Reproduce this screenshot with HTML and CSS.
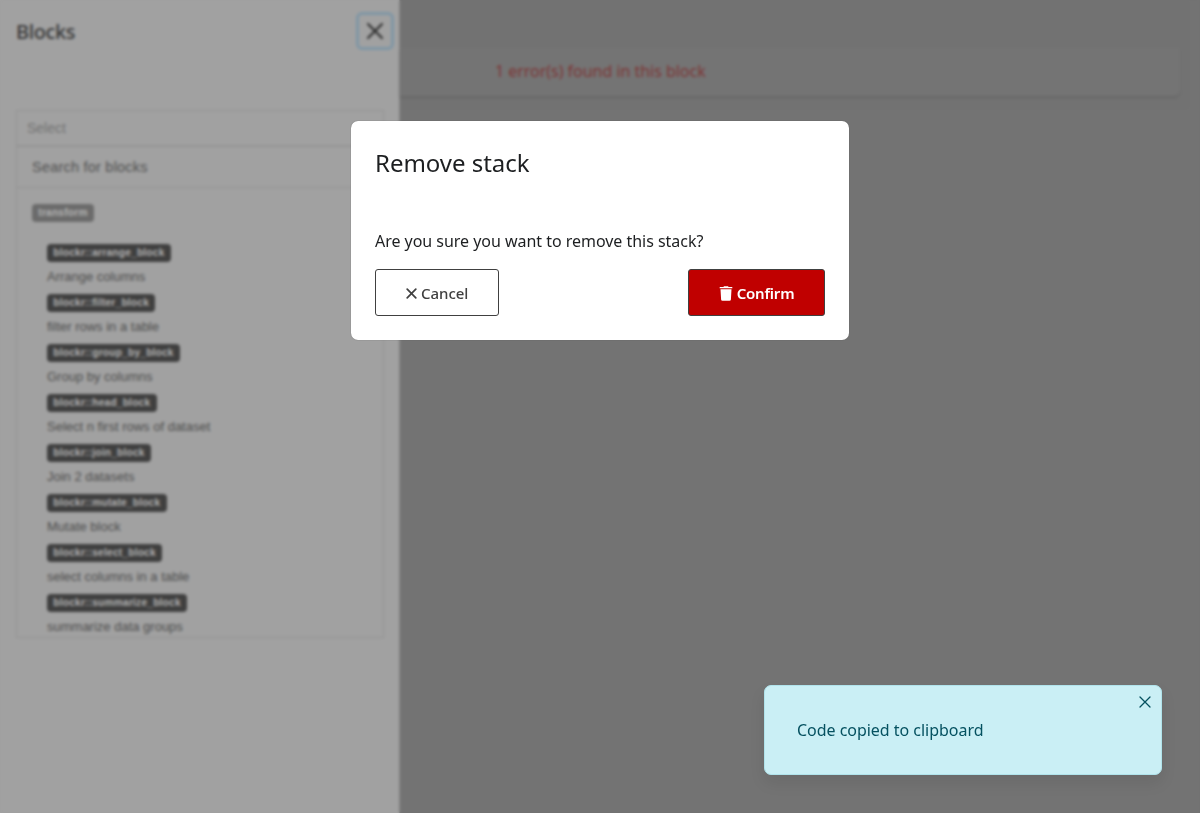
FILE: index.html
```html
<!DOCTYPE html>
<html lang="en">
<head>
<meta charset="utf-8">
<title>Remove stack</title>
<link rel="stylesheet" href="styles.css">
</head>
<body>
<div class="page">
  <aside class="panel">
    <header class="panel-header">
      <h5 class="panel-title">Blocks</h5>
      <button class="panel-close" aria-label="Close"><svg width="16" height="16" viewBox="0 0 16 16"><path d="M1 1l14 14M15 1L1 15" fill="none" stroke="#2a2a2a" stroke-width="2" stroke-linecap="round"/></svg></button>
    </header>
    <div class="picker">
      <div class="picker-value">Select</div>
      <div class="picker-search">Search for blocks</div>
      <div class="picker-list">
        <div class="group"><span class="badge badge-group">transform</span></div>
        <div class="option"><span class="badge">blockr::arrange_block</span><p>Arrange columns</p></div>
        <div class="option"><span class="badge">blockr::filter_block</span><p>filter rows in a table</p></div>
        <div class="option"><span class="badge">blockr::group_by_block</span><p>Group by columns</p></div>
        <div class="option"><span class="badge">blockr::head_block</span><p>Select n first rows of dataset</p></div>
        <div class="option"><span class="badge">blockr::join_block</span><p>Join 2 datasets</p></div>
        <div class="option"><span class="badge">blockr::mutate_block</span><p>Mutate block</p></div>
        <div class="option"><span class="badge">blockr::select_block</span><p>select columns in a table</p></div>
        <div class="option"><span class="badge">blockr::summarize_block</span><p>summarize data groups</p></div>
      </div>
    </div>
  </aside>
  <main class="content">
    <div class="stack"><div class="block"><p class="error">1 error(s) found in this block</p></div></div>
  </main>
</div>
<div class="backdrop">
  <section class="modal">
    <h4 class="modal-title">Remove stack</h4>
    <p class="modal-text">Are you sure you want to remove this stack?</p>
    <div class="modal-actions">
      <button class="btn btn-cancel"><svg width="11" height="11" viewBox="0 0 11 11"><path d="M1.2 1.2l8.6 8.6M9.8 1.2L1.2 9.8" fill="none" stroke="currentColor" stroke-width="1.7" stroke-linecap="round"/></svg><span>Cancel</span></button>
      <button class="btn btn-confirm"><svg width="14" height="15" viewBox="0 0 14 15"><path d="M4.4 1L5 .2h4L9.6 1H13q.4 0 .4.4v.8H.6v-.8Q.6 1 1 1zM1.5 3.2h11L11.9 13.4q-.1 1.4-1.4 1.4h-7q-1.3 0-1.4-1.4z" fill="currentColor"/></svg><span>Confirm</span></button>
    </div>
  </section>
</div>
<div class="toast">
  <span>Code copied to clipboard</span>
  <button class="toast-close" aria-label="Close"><svg width="12" height="12" viewBox="0 0 12 12"><path d="M1 1l10 10M11 1L1 11" fill="none" stroke="currentColor" stroke-width="1.3" stroke-linecap="round"/></svg></button>
</div>
</body>
</html>
```
FILE: styles.css
```css
* { box-sizing: border-box; }
body { margin: 0; font: 16px/24px "Noto Sans", sans-serif; letter-spacing: -0.03px; color: #1d1f21; background: #737373; overflow: hidden; }
h4, h5, p { margin: 0; }
button { font: inherit; letter-spacing: inherit; margin: 0; padding: 0; background: none; border: 0; }
svg { display: block; }

.page { display: flex; height: 813px; }
.panel { width: 400px; flex: none; padding: 12px 16px 0; background: #a1a1a1; border-right: 1px solid #868686; }
.panel-header { display: flex; justify-content: space-between; align-items: center; margin-right: -11px; height: 38px; }
.panel-title { padding-top: 2px; font-size: 20px; font-weight: 500; letter-spacing: -0.4px; color: #383838; }
.panel-close { width: 38px; height: 38px; display: grid; place-items: center; border: 3px solid #7f96a5; border-radius: 6px; }

.picker { margin-top: 60px; width: 368px; height: 528px; overflow: hidden; border: 1px solid #929292; font: 13px/20px "Liberation Sans", Arial, sans-serif; letter-spacing: 0; color: #4c4c4c; }
.picker-value { height: 36px; padding: 7px 10px; font-size: 14px; color: #727272; border-bottom: 2px solid #949494; }
.picker-search { height: 41px; padding: 10px 15px; font-size: 14.5px; letter-spacing: 0.22px; color: #505050; border-bottom: 1px solid #929292; }
.picker-list { padding: 15px 15px 0; }
.group { height: 40px; padding-top: 1px; }
.option { height: 50px; padding: 1px 0 0 15px; }
.option p { line-height: 20px; margin-top: 5px; }
.badge { display: block; width: fit-content; height: 18px; padding: 0 6.3px; border-radius: 4px; background: #3f3f3f; color: #b4b4b4; font-size: 10.2px; font-weight: 700; letter-spacing: 0.2px; line-height: 18px; }
.badge-group { background: #6b6b6b; }

.content { flex: 1; padding-right: 10px; }
.stack { height: 110px; padding: 48px 10px 0 0; border-radius: 0 6px 6px 0; background: #727272; }
.block { height: 48px; padding-top: 11px; background: #747474; border-radius: 0 0 6px 0; box-shadow: 0 2px 2px #686868; }
.error { padding-left: 95px; color: #7c3535; }

.backdrop { position: fixed; inset: 0; display: flex; justify-content: center; align-items: flex-start; padding-top: 121px; }
.backdrop::before { content: ""; position: absolute; inset: 0; backdrop-filter: blur(1.7px); }
.modal { position: relative; width: 498px; height: 219px; padding: 24px; background: #fff; border-radius: 7px; box-shadow: 0 0 1px #555; }
.modal-title { font-size: 24px; font-weight: 400; line-height: 36px; }
.modal-text { margin-top: 48px; }
.modal-actions { display: flex; justify-content: space-between; margin-top: 16px; }
.btn { display: flex; align-items: center; justify-content: center; gap: 4px; height: 47px; border: 1px solid #404040; border-radius: 3px; font-size: 15px; font-weight: 500; }
.btn svg { margin-top: 1px; }
.btn-cancel { width: 124.4px; color: #404040; }
.btn-confirm { width: 137px; background: #c00000; color: #fff; font-weight: 600; letter-spacing: -0.2px; }

.toast { position: fixed; left: 764px; top: 685px; width: 398px; height: 90px; padding: 32px; background: #caeff5; color: #055160; border: 1px solid #b0e3eb; border-radius: 7px; box-shadow: 0 8px 16px rgba(0, 0, 0, .08); }
.toast-close { position: absolute; right: 10px; top: 10px; color: #055160; }
```
